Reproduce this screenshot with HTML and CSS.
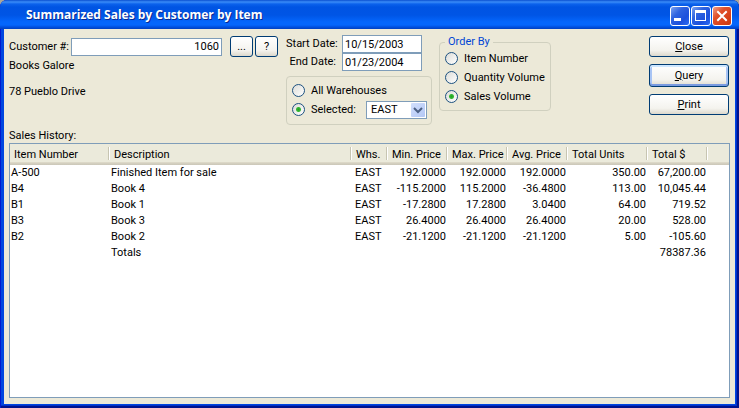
FILE: index.html
```html
<!DOCTYPE html>
<html lang="en">
<head>
<meta charset="utf-8">
<title>Summarized Sales by Customer by Item</title>
<link rel="stylesheet" href="styles.css">
</head>
<body>
<div class="window">
  <header class="titlebar">
    <h1 class="title">Summarized Sales by Customer by Item</h1>
    <div class="caption-buttons">
      <button class="caption" type="button" aria-label="Minimize">
        <svg viewBox="0 0 18 18" width="18" height="18"><path fill="#fff" d="M3 11h7v3H3z"/></svg>
      </button>
      <button class="caption" type="button" aria-label="Maximize">
        <svg viewBox="0 0 18 18" width="18" height="18"><path fill="#fff" fill-rule="evenodd" d="M3 3h11v11H3zM4 6v7h9V6z"/></svg>
      </button>
      <button class="caption caption-close" type="button" aria-label="Close window">
        <svg viewBox="0 0 18 18" width="18" height="18"><path stroke="#fff" stroke-width="2" stroke-linecap="square" d="M5 5l8 8M13 5l-8 8"/></svg>
      </button>
    </div>
  </header>
  <main class="client">
    <form class="filters">
      <section class="customer">
        <div class="customer-row">
          <label for="customer">Customer #:</label>
          <input class="field customer-number" id="customer" type="text" value="1060">
          <button class="button small" type="button">...</button>
          <button class="button small" type="button">?</button>
        </div>
        <p class="customer-name">Books Galore</p>
        <p class="customer-address">78 Pueblo Drive</p>
      </section>
      <section class="range">
        <div class="dates">
          <label for="start">Start Date:</label>
          <input class="field" id="start" type="text" value="10/15/2003">
          <label for="end">End Date:</label>
          <input class="field" id="end" type="text" value="01/23/2004">
        </div>
        <div class="group warehouses">
          <label class="option"><input type="radio" name="warehouse">All Warehouses</label>
          <div class="selected-row">
            <label class="option"><input type="radio" name="warehouse" checked>Selected:</label>
            <div class="combo">
              <select aria-label="Warehouse"><option>EAST</option></select>
              <svg class="combo-arrow" viewBox="0 0 14 14" width="14" height="14"><path fill="none" stroke="#4d6185" stroke-width="2" d="M3 5l4 4 4-4"/></svg>
            </div>
          </div>
        </div>
      </section>
      <fieldset class="group order">
        <legend>Order By</legend>
        <label class="option"><input type="radio" name="order">Item Number</label>
        <label class="option"><input type="radio" name="order">Quantity Volume</label>
        <label class="option"><input type="radio" name="order" checked>Sales Volume</label>
      </fieldset>
      <div class="actions">
        <button class="button" type="button"><u>C</u>lose</button>
        <button class="button default" type="button"><u>Q</u>uery</button>
        <button class="button" type="button"><u>P</u>rint</button>
      </div>
    </form>
    <h2 class="list-label">Sales History:</h2>
    <div class="list">
      <table>
        <colgroup>
          <col class="c-item"><col class="c-desc"><col class="c-whs"><col class="c-price"><col class="c-price"><col class="c-price"><col class="c-units"><col class="c-total"><col class="c-rest">
        </colgroup>
        <thead>
          <tr><th>Item Number</th><th>Description</th><th>Whs.</th><th>Min. Price</th><th>Max. Price</th><th>Avg. Price</th><th>Total Units</th><th>Total $</th><th></th></tr>
        </thead>
        <tbody>
          <tr><td>A-500</td><td>Finished Item for sale</td><td class="whs">EAST</td><td class="num">192.0000</td><td class="num">192.0000</td><td class="num">192.0000</td><td class="num">350.00</td><td class="num">67,200.00</td><td></td></tr>
          <tr><td>B4</td><td>Book 4</td><td class="whs">EAST</td><td class="num">-115.2000</td><td class="num">115.2000</td><td class="num">-36.4800</td><td class="num">113.00</td><td class="num">10,045.44</td><td></td></tr>
          <tr><td>B1</td><td>Book 1</td><td class="whs">EAST</td><td class="num">-17.2800</td><td class="num">17.2800</td><td class="num">3.0400</td><td class="num">64.00</td><td class="num">719.52</td><td></td></tr>
          <tr><td>B3</td><td>Book 3</td><td class="whs">EAST</td><td class="num">26.4000</td><td class="num">26.4000</td><td class="num">26.4000</td><td class="num">20.00</td><td class="num">528.00</td><td></td></tr>
          <tr><td>B2</td><td>Book 2</td><td class="whs">EAST</td><td class="num">-21.1200</td><td class="num">-21.1200</td><td class="num">-21.1200</td><td class="num">5.00</td><td class="num">-105.60</td><td></td></tr>
          <tr><td></td><td>Totals</td><td></td><td></td><td></td><td></td><td></td><td class="num">78387.36</td><td></td></tr>
        </tbody>
      </table>
    </div>
  </main>
</div>
</body>
</html>
```
FILE: styles.css
```css
* { box-sizing: border-box; }

body {
  margin: 0;
  background: #aca899;
  color: #000;
  font: 11px/16px Roboto, "Liberation Sans", Arial, sans-serif;
}

h1, h2, p { margin: 0; font-size: inherit; font-weight: normal; }

button, input, select { font: inherit; color: inherit; margin: 0; }

.window {
  display: flex;
  flex-direction: column;
  min-height: 100vh;
  padding: 0 4px 4px;
  border-radius: 7px 7px 0 0;
  overflow: hidden;
  background: #0046e0;
  box-shadow: inset 1px 0 #0019cf, inset -2px -2px #00138c, inset -3px -3px #0030c8;
}

.titlebar {
  display: flex;
  align-items: center;
  justify-content: space-between;
  height: 29px;
  margin: 0 -4px;
  padding: 3px 7px 0 26px;
  background: linear-gradient(#0a4fd0 0, #3a8cf8 2px, #0b62ec 4px, #0054e3 7px, #0055e5 15px, #0466fc 22px, #0466fc 25px, #0050e0 27px, #0040c0 29px);
}

.title {
  padding-bottom: 3px;
  color: #fff;
  font: bold 12px/18px "Open Sans", "Noto Sans", sans-serif;
  text-shadow: 1px 1px #0a2a90;
}

.caption-buttons { display: flex; gap: 1px; }

.caption {
  width: 20px;
  height: 20px;
  padding: 0;
  border: 1px solid #fff;
  border-radius: 3px;
  background: linear-gradient(135deg, #7ba2f0 0, #2e63e0 35%, #1c50dc 70%, #2c6cf4 100%);
}

.caption svg { display: block; }

.caption-close { background: linear-gradient(135deg, #f0a088 0, #e0512c 35%, #d8411a 70%, #c83a10 100%); }

.client {
  display: flex;
  flex: 1;
  flex-direction: column;
  padding: 6px 5px;
  background: #ece9d8;
}

.filters { display: flex; align-items: flex-start; gap: 7px; }

.field {
  height: 18px;
  min-width: 0;
  padding: 0 2px;
  border: 1px solid #7f9db9;
  background: #fff;
}

.customer { width: 270px; padding: 1px 1px 0 0; }

.customer-row { display: flex; align-items: center; gap: 2px; }

.customer-row label { width: 60px; white-space: nowrap; }

.customer-number { flex: 1; margin-right: 6px; text-align: right; }

.customer-name { margin-top: 1px; }

.customer-address { margin-top: 10px; }

.button {
  height: 21px;
  padding: 0;
  border: 1px solid #003c74;
  border-radius: 3px;
  background: linear-gradient(#fff, #f4f3ee 70%, #dcd8cc);
  line-height: 18px;
}

.small { width: 23px; }

.range { width: 146px; }

.dates {
  display: grid;
  grid-template-columns: 50px 80px;
  gap: 0 6px;
  align-items: center;
}

.dates label { text-align: right; white-space: nowrap; }

.group {
  margin: 0;
  border: 1px solid #d0d0bf;
  border-radius: 4px;
}

.warehouses { margin-top: 5px; padding: 4px 4px 5px 5px; }

.option {
  display: flex;
  align-items: center;
  gap: 6px;
  height: 19px;
  white-space: nowrap;
}

.option input {
  appearance: none;
  flex: none;
  width: 13px;
  height: 13px;
  border: 1px solid #1c5180;
  border-radius: 50%;
  background: linear-gradient(135deg, #dcdcd7, #fff);
}

.option input:checked {
  background: radial-gradient(circle, #21a121 0, #35b835 2px, transparent 3px), linear-gradient(135deg, #dcdcd7, #fff);
}

.selected-row { display: flex; align-items: center; justify-content: space-between; }

.combo { position: relative; width: 61px; height: 18px; }

.combo select {
  appearance: none;
  display: block;
  width: 100%;
  height: 100%;
  padding: 0 4px;
  border: 1px solid #7f9db9;
  border-radius: 0;
  background: #fff;
}

.combo-arrow {
  position: absolute;
  top: 2px;
  right: 2px;
  border-radius: 1px;
  background: linear-gradient(135deg, #d2dffc, #b3c7f5);
  pointer-events: none;
}

.order { width: 112px; padding: 0 5px 4px; }

.order legend { padding: 0 3px; color: #0046d5; line-height: 14px; }

.actions {
  display: flex;
  flex-direction: column;
  gap: 7px;
  width: 80px;
  margin: 1px 1px 0 auto;
}

.default {
  height: 23px;
  box-shadow: inset 0 2px #cee7ff, inset 0 -2px #7a9be0, inset 2px 0 #a8c4f4, inset -2px 0 #a8c4f4;
}

.list-label { margin-top: 3px; line-height: 15px; }

.list {
  flex: 1;
  border: 1px solid #7f9db9;
  background: #fff;
}

table { width: 100%; border-collapse: collapse; table-layout: fixed; }

.c-item { width: 100px; }
.c-whs { width: 36px; }
.c-price, .c-total { width: 60px; }
.c-units { width: 80px; }
.c-rest { width: 21px; }

th {
  height: 21px;
  padding: 1px 0 0 4px;
  background:
    linear-gradient(#c7c5b2, #c7c5b2) right 1px top 3px / 1px 13px no-repeat,
    linear-gradient(#fff, #fff) right 0 top 3px / 1px 13px no-repeat,
    linear-gradient(#ebeadb 18px, #e2decd 18px, #d6d2c2 19px, #cbc7b8 21px);
  font-weight: normal;
  text-align: left;
  white-space: nowrap;
}

th:last-child { background: linear-gradient(#ebeadb 18px, #e2decd 18px, #d6d2c2 19px, #cbc7b8 21px); }

td { height: 16px; padding: 0 2px 0 1px; white-space: nowrap; }

.whs { padding-left: 3px; }

.num { text-align: right; }
```
